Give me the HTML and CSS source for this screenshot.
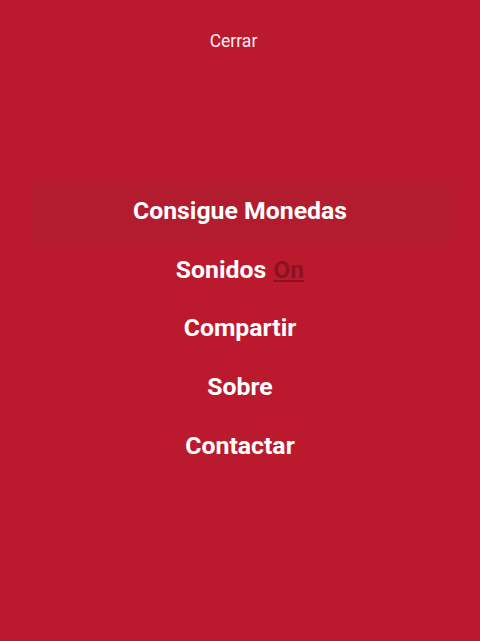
FILE: index.html
```html
<!DOCTYPE html>
<html>
<head>
<meta charset="utf-8">
<link rel="stylesheet" href="styles.css">
</head>
<body>
<div class="screen">
  <div class="close">Cerrar</div>
  <nav class="menu">
    <div class="item active">Consigue Monedas</div>
    <div class="item">Sonidos <span class="toggle">On</span></div>
    <div class="item">Compartir</div>
    <div class="item">Sobre</div>
    <div class="item">Contactar</div>
  </nav>
</div>
</body>
</html>
```
FILE: styles.css
```css
html, body {
  margin: 0;
  padding: 0;
  background: #bb1a2e;
}
.screen {
  width: 480px;
  height: 641px;
  background: #bb1a2e;
  font-family: Roboto, "Liberation Sans", sans-serif;
  color: #fff;
  display: flex;
  flex-direction: column;
  align-items: center;
}
.close {
  margin-top: 31px;
  margin-left: -13px;
  font-size: 17.5px;
  line-height: 20px;
  color: #fdeef0;
}
.menu {
  margin-top: 131px;
  width: 418px;
  display: flex;
  flex-direction: column;
}
.item {
  box-sizing: border-box;
  height: 58.7px;
  padding-bottom: 2px;
  display: flex;
  align-items: center;
  justify-content: center;
  font-size: 24.8px;
  font-weight: bold;
  color: #fff;
}
.item.active {
  height: 60px;
  margin-bottom: -1.3px;
  padding-bottom: 3px;
  background: #b21c2e;
}
.toggle {
  color: #8c1222;
  text-decoration: underline;
  margin-left: 7px;
}
```
